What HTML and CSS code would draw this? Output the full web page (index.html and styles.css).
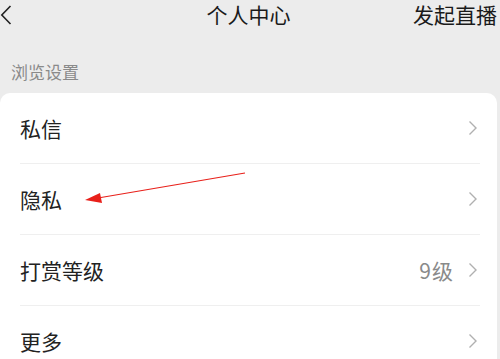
FILE: index.html
```html
<!DOCTYPE html>
<html lang="zh-CN">
<head>
<meta charset="utf-8">
<link rel="stylesheet" href="styles.css">
</head>
<body>
<div class="page">
  <header class="topbar">
    <div class="back">
      <svg width="12" height="20" viewBox="0 0 12 20"><path d="M10.5 1 L1.8 10 L10.5 19" fill="none" stroke="#222" stroke-width="1.6"/></svg>
    </div>
    <div class="title">个人中心</div>
    <div class="action">发起直播</div>
  </header>
  <div class="section-label">浏览设置</div>
  <div class="card">
    <div class="row"><span class="label">私信</span><span class="right"><svg class="chev" width="10" height="16" viewBox="0 0 10 16"><path d="M1.5 1.5 L8 8 L1.5 14.5" fill="none" stroke="#b0b0b0" stroke-width="1.4"/></svg></span></div>
    <div class="row"><span class="label">隐私</span><span class="right"><svg class="chev" width="10" height="16" viewBox="0 0 10 16"><path d="M1.5 1.5 L8 8 L1.5 14.5" fill="none" stroke="#b0b0b0" stroke-width="1.4"/></svg></span></div>
    <div class="row"><span class="label">打赏等级</span><span class="right"><span class="value">9级</span><svg class="chev" width="10" height="16" viewBox="0 0 10 16"><path d="M1.5 1.5 L8 8 L1.5 14.5" fill="none" stroke="#b0b0b0" stroke-width="1.4"/></svg></span></div>
    <div class="row last"><span class="label">更多</span><span class="right"><svg class="chev" width="10" height="16" viewBox="0 0 10 16"><path d="M1.5 1.5 L8 8 L1.5 14.5" fill="none" stroke="#b0b0b0" stroke-width="1.4"/></svg></span></div>
  </div>
  <svg class="arrow" width="500" height="359" viewBox="0 0 500 359">
    <line x1="245" y1="173" x2="98" y2="198" stroke="#e8201a" stroke-width="1.2"/>
    <polygon points="85,200 100,193 102,203" fill="#e8201a"/>
  </svg>
</div>
</body>
</html>
```
FILE: styles.css
```css
html, body {
  margin: 0;
  padding: 0;
}
body {
  background: #ececec;
  font-family: "Noto Sans CJK SC", "Noto Sans", sans-serif;
  color: #222;
  width: 500px;
  height: 359px;
  overflow: hidden;
}
.page {
  position: relative;
  width: 500px;
  height: 359px;
}
.topbar {
  display: grid;
  grid-template-columns: 1fr auto 1fr;
  align-items: center;
  height: 28px;
}
.back {
  display: flex;
  align-items: center;
  padding-top: 2px;
}
.title {
  font-size: 21px;
  line-height: 28px;
  color: #1a1a1a;
  padding-right: 3px;
}
.action {
  justify-self: end;
  font-size: 21px;
  line-height: 28px;
  color: #1a1a1a;
  padding-right: 3px;
}
.section-label {
  font-size: 17px;
  line-height: 24px;
  color: #8a8a8a;
  padding: 32px 0 0 11px;
  height: 33px;
}
.card {
  background: #fff;
  margin-right: 3px;
  border-radius: 10px 10px 0 0;
}
.row {
  display: flex;
  align-items: center;
  justify-content: space-between;
  height: 70px;
  margin: 0 17px 0 20px;
  border-bottom: 1px solid #efefef;
}
.row.last {
  border-bottom: none;
}
.label {
  font-size: 21px;
  line-height: 28px;
  color: #222;
}
.right {
  display: flex;
  align-items: center;
  padding-right: 2px;
}
.value {
  font-size: 21px;
  line-height: 28px;
  color: #8a8a8a;
  margin-right: 14px;
  letter-spacing: 1px;
}
.chev {
  display: block;
}
.arrow {
  position: absolute;
  left: 0;
  top: 0;
  pointer-events: none;
}
```
